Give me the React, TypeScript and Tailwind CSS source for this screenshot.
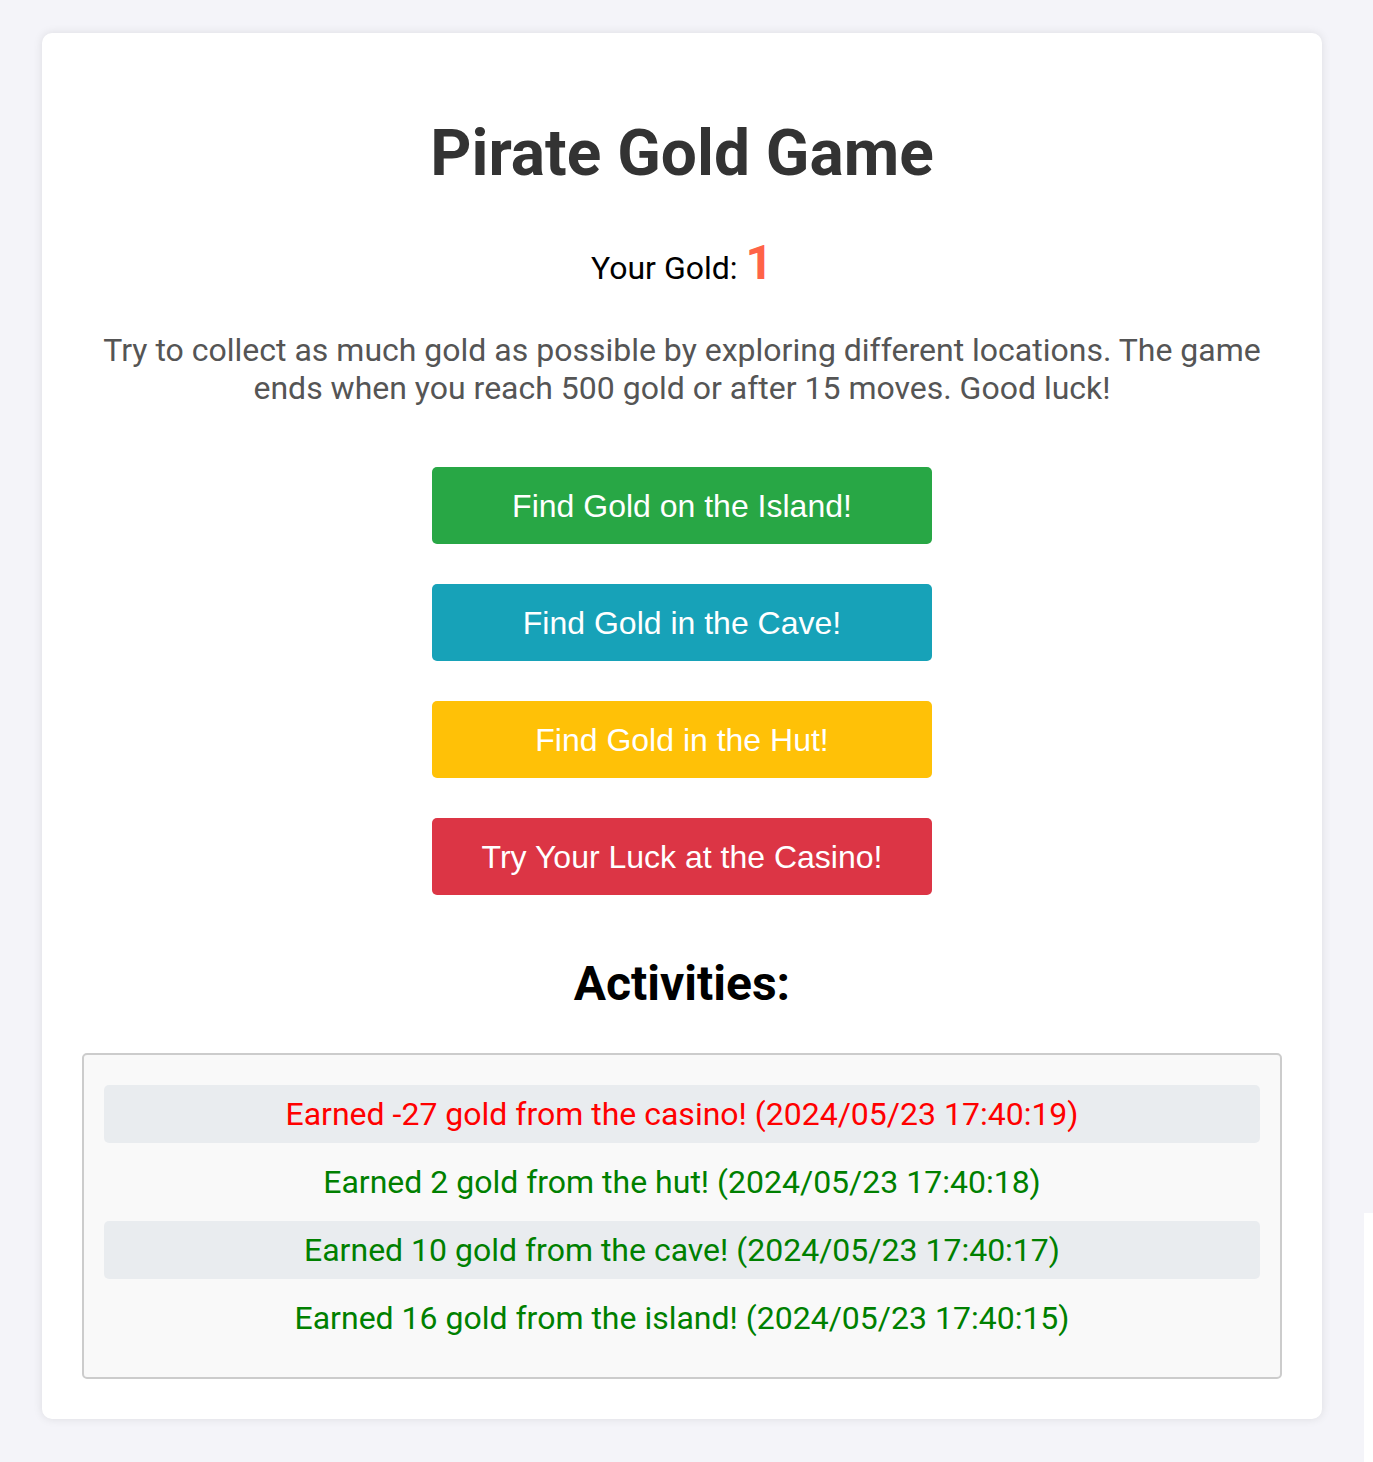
import React from "react";

const activities = [
  { text: "Earned -27 gold from the casino! (2024/05/23 17:40:19)", color: "text-[#ff0000]", shaded: true },
  { text: "Earned 2 gold from the hut! (2024/05/23 17:40:18)", color: "text-[#008000]", shaded: false },
  { text: "Earned 10 gold from the cave! (2024/05/23 17:40:17)", color: "text-[#008000]", shaded: true },
  { text: "Earned 16 gold from the island! (2024/05/23 17:40:15)", color: "text-[#008000]", shaded: false },
];

const buttons = [
  { label: "Find Gold on the Island!", cls: "bg-[#28a745]" },
  { label: "Find Gold in the Cave!", cls: "bg-[#17a2b8]" },
  { label: "Find Gold in the Hut!", cls: "bg-[#ffc107]" },
  { label: "Try Your Luck at the Casino!", cls: "bg-[#dc3545]" },
];

export default function App() {
  return (
    <div className="relative min-h-[1462px] w-[1373px] bg-[#f4f4f9] pl-[42px] pt-[33px] pb-[44px] font-['Roboto',sans-serif]">
      <div className="w-[1280px] rounded-[10px] bg-white p-[40px] text-center shadow-[0_0_10px_rgba(0,0,0,0.1)]">
        <h1 className="mt-[43px] mb-[43px] text-[64px] leading-[normal] font-bold text-[#333]">Pirate Gold Game</h1>
        <p className="text-[32px] leading-[normal] text-black">
          Your Gold: <span className="text-[48px] leading-[normal] font-bold text-[#ff6347]">1</span>
        </p>
        <p className="mt-[40px] text-[32px] leading-[normal] text-[#555]">
          Try to collect as much gold as possible by exploring different locations. The game ends when you reach 500 gold or after 15 moves. Good luck!
        </p>
        <div className="mt-[60px] flex flex-col items-center gap-[40px]">
          {buttons.map((b) => (
            <button
              key={b.label}
              className={`h-[77px] w-[500px] rounded-[5px] ${b.cls} font-['Liberation_Sans',Arial,sans-serif] text-[32px] text-white`}
            >
              {b.label}
            </button>
          ))}
        </div>
        <h2 className="mt-[60px] mb-[41px] text-[48px] leading-[normal] font-bold text-black">Activities:</h2>
        <div className="rounded-[5px] border-2 border-[#ccc] bg-[#f9f9f9] px-[20px] py-[30px]">
          <ul className="flex flex-col gap-[10px]">
            {activities.map((a) => (
              <li
                key={a.text}
                className={`rounded-[5px] py-[10px] text-[32px] leading-[normal] ${a.color} ${a.shaded ? "bg-[#e9ecef]" : ""}`}
              >
                {a.text}
              </li>
            ))}
          </ul>
        </div>
      </div>
      <div className="absolute top-[1213px] right-0 bottom-0 w-[9px] bg-white" />
    </div>
  );
}
